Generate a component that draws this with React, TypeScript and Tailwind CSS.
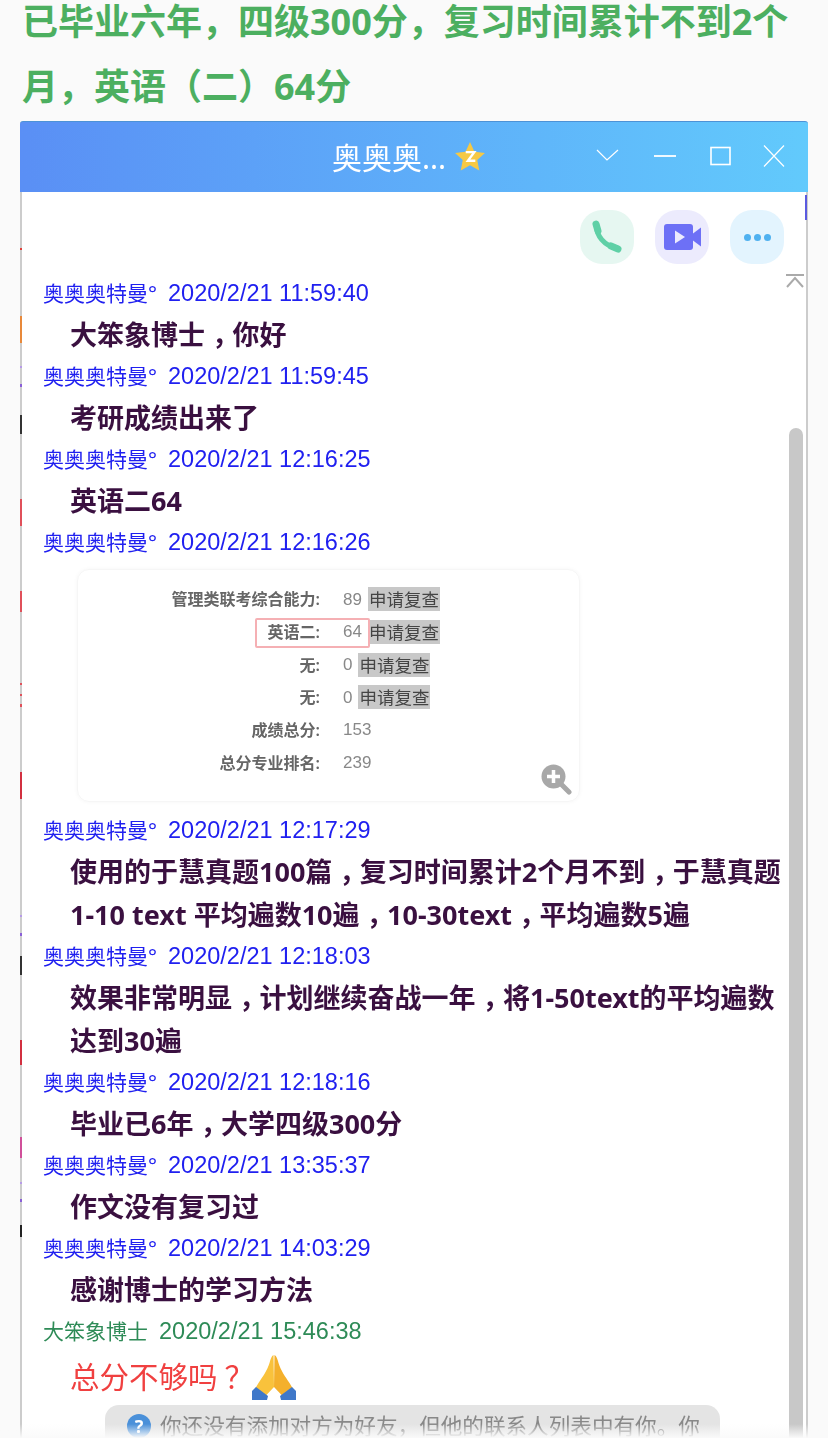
const cjk = 'font-["Noto_Sans","Noto_Sans_CJK_SC",sans-serif]';

// little colored ticks of the page behind, showing along the window edges
const edgeMarks = [
  { top: 248, h: 2, color: '#e0403a', x: 20 },
  { top: 316, h: 27, color: '#e8893a', x: 20 },
  { top: 366, h: 2, color: '#b79be8', x: 20 },
  { top: 384, h: 3, color: '#8a5fd8', x: 20 },
  { top: 415, h: 19, color: '#333333', x: 20 },
  { top: 499, h: 27, color: '#e0505a', x: 20 },
  { top: 591, h: 21, color: '#e0505a', x: 20 },
  { top: 683, h: 2, color: '#e0505a', x: 20 },
  { top: 694, h: 2, color: '#e0505a', x: 20 },
  { top: 704, h: 3, color: '#e0505a', x: 20 },
  { top: 772, h: 27, color: '#d23040', x: 20 },
  { top: 915, h: 2, color: '#b79be8', x: 20 },
  { top: 933, h: 3, color: '#8a5fd8', x: 20 },
  { top: 956, h: 19, color: '#333333', x: 20 },
  { top: 1040, h: 25, color: '#d23040', x: 20 },
  { top: 1137, h: 21, color: '#d0509a', x: 20 },
  { top: 1182, h: 2, color: '#b79be8', x: 20 },
  { top: 1199, h: 3, color: '#8a5fd8', x: 20 },
  { top: 1225, h: 12, color: '#222222', x: 20 },
  { top: 195, h: 25, color: '#5a5ae0', x: 805 },
];

const scoreRows = [
  { label: '管理类联考综合能力:', value: '89', btn: true },
  { label: '英语二:', value: '64', btn: true },
  { label: '无:', value: '0', btn: true },
  { label: '无:', value: '0', btn: true },
  { label: '成绩总分:', value: '153', btn: false },
  { label: '总分专业排名:', value: '239', btn: false },
];

function Head({ time, me = false }: { time: string; me?: boolean }) {
  return (
    <div className={`pl-[21px] text-[21px] leading-[40px] whitespace-nowrap ${me ? 'text-[#2e8b57]' : 'text-[#2020f0]'}`}>
      {me ? '大笨象博士' : '奥奥奥特曼°'}
      <span className='ml-[11px] font-["Liberation_Sans",sans-serif] text-[23.5px]'>{time}</span>
    </div>
  );
}

function Msg({ lines }: { lines: string[] }) {
  return (
    <div className="pl-[48px] text-[27px] leading-[43px] font-bold text-[#3a1040] whitespace-nowrap">
      {lines.map((line) => (
        <div key={line}>
          {line.split('，').map((part, i) => (
            <span key={i}>
              {i > 0 && <span className='mx-[7px] [font-feature-settings:"halt"]'>，</span>}
              {part}
            </span>
          ))}
        </div>
      ))}
    </div>
  );
}

function ScoreCard() {
  return (
    <div className="relative mt-[7px] mb-[8px] ml-[55px] h-[233px] w-[503px] rounded-xl border border-[#f6f6f6] shadow-[0_0_4px_rgba(0,0,0,0.04)] pt-[13px]">
      <div className="blur-[0.5px]">
        {scoreRows.map((r, i) => (
          <div key={i} className="flex h-[32.7px] items-center">
            <div className="w-[242px] text-right text-[16px] font-semibold text-[#666666]">{r.label}</div>
            <div className='ml-[23px] font-["Liberation_Sans",sans-serif] text-[17px] text-[#888888]'>{r.value}</div>
            {r.btn && (
              <div className="ml-[6px] h-[24px] bg-[#c8c8c8] px-[1px] text-[17.5px] leading-[24px] text-[#444444]">申请复查</div>
            )}
          </div>
        ))}
      </div>
      {/* red highlight round the english row */}
      <div className="absolute left-[177px] top-[48px] h-[30px] w-[115px] rounded-[2px] border-2 border-[#f5b0b4]" />
      <svg className="absolute left-[462px] top-[193px]" width="32" height="32" viewBox="0 0 32 32">
        <circle cx="13.5" cy="13.5" r="12" fill="#a8a8a8" />
        <path d="M13.5 7v13M7 13.5h13" stroke="#fff" strokeWidth="3.5" />
        <path d="M22 22l7 7" stroke="#a8a8a8" strokeWidth="5" strokeLinecap="round" />
      </svg>
    </div>
  );
}

function Star() {
  return (
    <svg width="32" height="32" viewBox="0 0 30 30" className="ml-[8px]">
      <path d="M15 1l4.200 9 9.800 1.200-7.200 6.700 1.900 9.700L15 22.800l-8.700 4.800 1.900-9.700L1 11.200l9.800-1.200z" fill="#f6c945" />
      <path d="M11 10.500h8l-6 8h7" fill="none" stroke="#fff" strokeWidth="2.200" />
    </svg>
  );
}

function WindowButtons() {
  return (
    <svg className="absolute left-[575px] top-[22px]" width="190" height="24" viewBox="0 0 190 24" fill="none" stroke="#fff" strokeWidth="1.200">
      <path d="M2 6l10 10L23 6" />
      <path d="M59 12h22" strokeWidth="1.800" />
      <rect x="116" y="3.500" width="19" height="17" strokeWidth="1.600" />
      <path d="M169 1.500l20 21M189 1.500l-20 21" />
    </svg>
  );
}

function PrayingHands() {
  return (
    <svg width="46" height="46" viewBox="0 0 46 46" className="ml-[5px]">
      <path d="M22.500 1c-2 1-3 4-4 8-2 7-7 14-11 20-1 2-2 3-3 5l10 8 8.500-9z" fill="#f9c23c" />
      <path d="M23.500 1c2 1 3 4 4 8 2 7 7 14 11 20 1 2 2 3 3 5l-10 8-8.500-9z" fill="#f4b02c" />
      <path d="M1 37l4-4 12 9-1 4H1z" fill="#3f78c9" />
      <path d="M45 37l-4-4-12 9 1 4h15z" fill="#3f78c9" />
    </svg>
  );
}

export default function App() {
  return (
    <div className={`relative h-[1438px] w-[828px] overflow-hidden bg-[#fafafa] ${cjk}`}>
      <h1 className="pl-[22px] text-[36px] font-bold text-[#4caf60] whitespace-nowrap">
        <div className="leading-[44px]">已毕业六年，四级300分，复习时间累计不到2个</div>
        <div className="mt-[10px] leading-[65px]">月，英语（二）64分</div>
      </h1>

      <div className="relative mt-[2px] ml-[20px] w-[788px] blur-[0.3px]">
        <header className="relative flex h-[71px] items-center justify-center rounded-t-[3px] border-t border-[#4d92d6] bg-gradient-to-r from-[#5a8ff5] to-[#62cafc] pr-[10px]">
          <span className="text-[30px] text-white">奥奥奥...</span>
          <Star />
          <WindowButtons />
        </header>

        <div className="relative h-[1246px] overflow-hidden border-x-2 border-[#cccccc] bg-white">
          <div className="flex justify-end gap-[21px] pt-[18px] pr-[22px] pb-[9px]">
            <div className="flex h-[54px] w-[54px] items-center justify-center rounded-[22px] bg-[#e6f7f1]">
              <svg width="32" height="34" viewBox="0 0 32 34" fill="none" stroke="#5fd0a6" strokeLinecap="round">
                <path d="M6 6c-1 9 7 20 20 22" strokeWidth="5" />
                <path d="M5 4l2 7M20 26l7 3" strokeWidth="7" />
              </svg>
            </div>
            <div className="flex h-[54px] w-[54px] items-center justify-center rounded-[22px] bg-[#ecebfd]">
              <svg width="37" height="26" viewBox="0 0 37 26">
                <rect x="0" y="0" width="29" height="26" rx="3" fill="#6d70f6" />
                <path d="M29 9.500L37 3.500v19l-8-6z" fill="#6d70f6" />
                <path d="M11 6.500l10 6.500-10 6.500z" fill="#ecebfd" />
              </svg>
            </div>
            <div className="flex h-[54px] w-[54px] items-center justify-center gap-[3px] rounded-[22px] bg-[#e3f4fe]">
              <div className="h-[7px] w-[7px] rounded-full bg-[#4fb1f0]" />
              <div className="h-[7px] w-[7px] rounded-full bg-[#4fb1f0]" />
              <div className="h-[7px] w-[7px] rounded-full bg-[#4fb1f0]" />
            </div>
          </div>

          <Head time="2020/2/21 11:59:40" />
          <Msg lines={['大笨象博士，你好']} />
          <Head time="2020/2/21 11:59:45" />
          <Msg lines={['考研成绩出来了']} />
          <Head time="2020/2/21 12:16:25" />
          <Msg lines={['英语二64']} />
          <Head time="2020/2/21 12:16:26" />
          <ScoreCard />
          <Head time="2020/2/21 12:17:29" />
          <Msg lines={['使用的于慧真题100篇，复习时间累计2个月不到，于慧真题', '1-10 text 平均遍数10遍，10-30text，平均遍数5遍']} />
          <Head time="2020/2/21 12:18:03" />
          <Msg lines={['效果非常明显，计划继续奋战一年，将1-50text的平均遍数', '达到30遍']} />
          <Head time="2020/2/21 12:18:16" />
          <Msg lines={['毕业已6年，大学四级300分']} />
          <Head time="2020/2/21 13:35:37" />
          <Msg lines={['作文没有复习过']} />
          <Head time="2020/2/21 14:03:29" />
          <Msg lines={['感谢博士的学习方法']} />
          <Head me time="2020/2/21 15:46:38" />

          <div className="flex h-[52px] items-center pl-[48px] text-[29.5px] text-[#f04040] whitespace-nowrap">
            总分不够吗<span className='mx-[7px] [font-feature-settings:"halt"]'>？</span>
            <PrayingHands />
          </div>

          <div className="mt-[2px] ml-[83px] flex h-[60px] w-[615px] items-start gap-[9px] rounded-t-[14px] bg-[#e4e4e4] pt-[10px] pl-[22px] text-[21.6px] leading-[22px] text-[#888888] whitespace-nowrap">
            <div className="-mt-[1px] flex h-[24px] w-[24px] items-center justify-center rounded-full bg-[#4a90d9] text-[18px] font-bold text-white">?</div>
            <span>你还没有添加对方为好友，但他的联系人列表中有你。你</span>
          </div>

          {/* scroll to top + scrollbar, over the messages */}
          <svg className="absolute left-[763px] top-[81px]" width="20" height="16" viewBox="0 0 20 16" fill="none" stroke="#aaaaaa" strokeWidth="2">
            <path d="M1 2h18M2 14l8-9 8 9" />
          </svg>
          <div className="absolute left-[767px] top-[236px] h-[1010px] w-[14px] rounded-t-[7px] bg-[#c8c8c8]" />
        </div>
      </div>

      {edgeMarks.map((m) => (
        <div
          key={m.top}
          className="absolute w-[2px]"
          style={{ top: m.top, height: m.h, left: m.x, backgroundColor: m.color }}
        />
      ))}

      {/* bottom fade */}
      <div className="absolute bottom-0 left-0 h-[14px] w-full bg-gradient-to-b from-transparent to-[#fafafa]" />
    </div>
  );
}
